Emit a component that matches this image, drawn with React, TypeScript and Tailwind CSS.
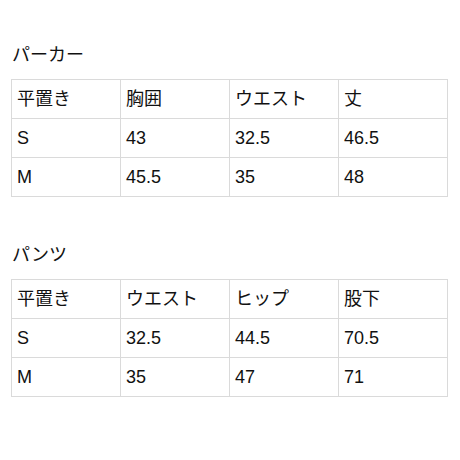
import React from "react";

const font = { fontFamily: '"Liberation Sans", "Noto Sans CJK JP", sans-serif' };

function SizeTable({ title, rows, top }: { title: string; rows: string[][]; top: string }) {
  return (
    <div className={top}>
      <div className="h-[24px] pl-[12px] text-[18px] leading-[24px] text-[#111]">{title}</div>
      <div className="mt-[12px] ml-[11px] w-[437px] grid grid-cols-4 border-r border-b border-[#dadada]">
        {rows.flat().map((c, i) => (
          <div
            key={i}
            className="h-[39px] border-l border-t border-[#dadada] pl-[5px] flex items-center text-[18px] text-[#111] leading-none"
          >
            {c}
          </div>
        ))}
      </div>
    </div>
  );
}

export default function App() {
  return (
    <div className="w-[460px] h-[460px] bg-white" style={font}>
      <SizeTable
        top="pt-[43px]"
        title="パーカー"
        rows={[
          ["平置き", "胸囲", "ウエスト", "丈"],
          ["S", "43", "32.5", "46.5"],
          ["M", "45.5", "35", "48"],
        ]}
      />
      <SizeTable
        top="pt-[46px]"
        title="パンツ"
        rows={[
          ["平置き", "ウエスト", "ヒップ", "股下"],
          ["S", "32.5", "44.5", "70.5"],
          ["M", "35", "47", "71"],
        ]}
      />
    </div>
  );
}
